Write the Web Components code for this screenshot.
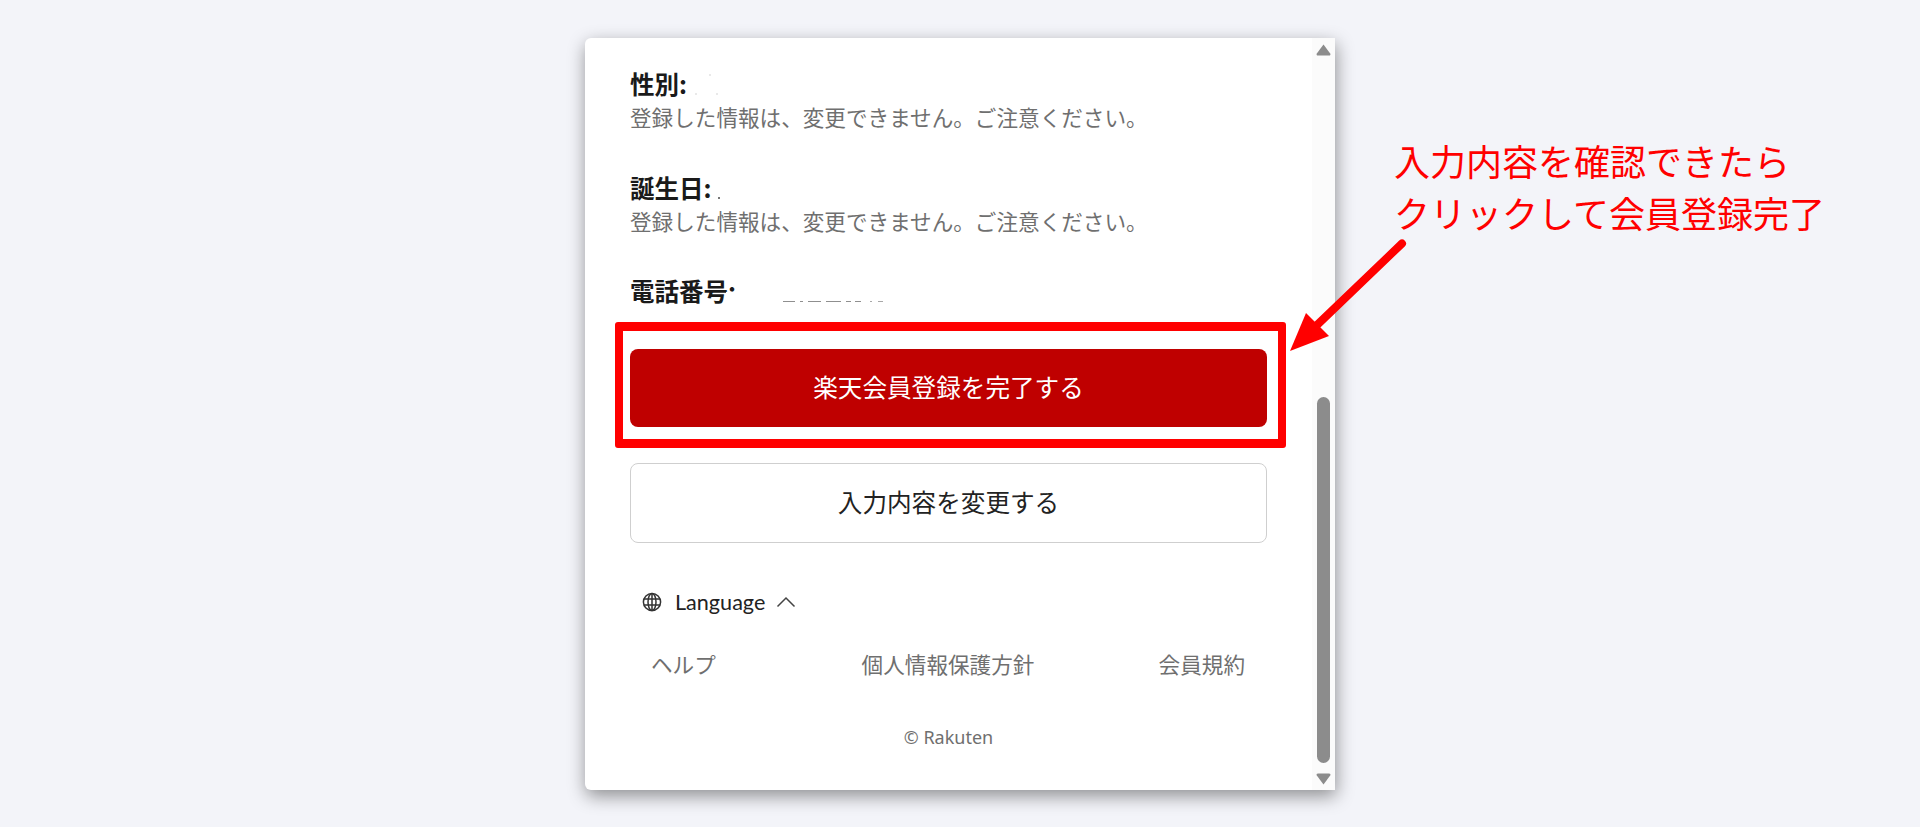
<!DOCTYPE html>
<html lang="ja"><head><meta charset="utf-8"><title>楽天会員登録</title>
<style>
html,body{margin:0;height:100%;}
body{background:#f3f4f9;overflow:hidden;font-family:"Noto Sans CJK JP","Noto Sans",sans-serif;}
</style></head><body>
<app-stage>
  <reg-card>
    <reg-field label="性別:" mask="sex">登録した情報は、変更できません。ご注意ください。</reg-field>
    <reg-field label="誕生日:" mask="birth">登録した情報は、変更できません。ご注意ください。</reg-field>
    <reg-field label="電話番号:" mask="phone" last></reg-field>
    <reg-button variant="primary">楽天会員登録を完了する</reg-button>
    <reg-button variant="secondary">入力内容を変更する</reg-button>
    <reg-footer></reg-footer>
  </reg-card>
  <call-out></call-out>
</app-stage>
<script>
function def(name, html, init){
  customElements.define(name, class extends HTMLElement{
    constructor(){super();this.attachShadow({mode:'open'}).innerHTML=html;}
    connectedCallback(){if(init)init(this);}
  });
}
def('app-stage',`<style>
:host{display:flex;justify-content:center;align-items:flex-start;box-sizing:border-box;height:827px;padding-top:38px;position:relative;}
</style><slot></slot>`);

def('reg-card',`<style>
:host{display:flex;width:750px;height:752px;background:#fff;border-radius:6px 0 0 6px;box-shadow:1px 6px 18px rgba(0,0,0,.42);overflow:hidden;flex:none;}
.body{flex:1;min-width:0;box-sizing:border-box;padding:30px 0 0 45px;display:flex;flex-direction:column;align-items:flex-start;}
</style><div class="body"><slot></slot></div><reg-scrollbar></reg-scrollbar>`);

def('reg-scrollbar',`<style>
:host{display:flex;flex-direction:column;align-items:center;width:23px;flex:none;background:#fbfbfb;box-sizing:border-box;padding:6px 0;position:relative;}
svg{display:block;flex:none}
.sp{height:341px;flex:none}
.thumb{width:13px;height:366px;background:#8c8c8c;border-radius:7px;flex:none;}
.sp2{height:10px;flex:none}
</style>
<svg width="15" height="12" viewBox="0 0 15 12"><path d="M7.5 .5 L14.2 9.5 Q15 11.5 13 11.5 L2 11.5 Q0 11.5 .8 9.5 Z" fill="#8c8c8c"/></svg>
<div class="sp"></div><div class="thumb"></div><div class="sp2"></div>
<svg width="15" height="12" viewBox="0 0 15 12"><path d="M7.5 11.5 L14.2 2.5 Q15 .5 13 .5 L2 .5 Q0 .5 .8 2.5 Z" fill="#8c8c8c"/></svg>`);

def('reg-field',`<style>
:host{display:block;height:103.5px;width:637px;position:relative;}
:host([last]){height:74px;}
.l{font-size:24.5px;line-height:34px;margin-top:-1px;margin-bottom:1px;font-weight:700;color:#1a1a1a;}
.s{font-size:21.6px;line-height:34px;margin-top:-2px;color:#6f6f6f;}
.m{position:absolute;background:#fff;}
.d{position:absolute;height:1px;width:102px;background:linear-gradient(90deg,#8f8f8f 0 12px,transparent 12px 17px,#8f8f8f 17px 20px,transparent 20px 25px,#8f8f8f 25px 38px,transparent 38px 43px,#8f8f8f 43px 58px,transparent 58px 63px,#8f8f8f 63px 68px,transparent 68px 72px,#8f8f8f 72px 78px,transparent 78px 87px,#a8a8a8 87px 89px,transparent 89px 95px,#a8a8a8 95px 100px,transparent 100px);}
.p{position:absolute;width:2px;height:2px;background:#e9e9e9;}
</style><div class="l"></div><div class="s"><slot></slot></div><div id="o"></div>`,el=>{
  const r=el.shadowRoot;
  r.querySelector('.l').textContent=el.getAttribute('label');
  const k=el.getAttribute('mask'),o=r.getElementById('o');
  if(k==='phone'){o.innerHTML='<div class="m" style="left:96px;top:17px;width:10px;height:17px"></div><div class="d" style="left:153px;top:26px"></div>';}
  if(k==='sex'){o.innerHTML='<div class="p" style="left:65px;top:25px"></div><div class="p" style="left:79px;top:6px"></div><div class="p" style="left:86px;top:25px"></div>';}
  if(k==='birth'){o.innerHTML='<div class="p" style="left:88px;top:25px;background:#777"></div>';}
});

def('reg-button',`<style>
:host{display:flex;align-items:center;justify-content:center;box-sizing:border-box;width:637px;font-size:24.6px;border-radius:8px;padding-bottom:4px;}
:host([variant=primary]){height:78px;background:#bf0000;color:#fff;margin-top:0;}
:host([variant=secondary]){height:80px;background:#fff;color:#222;border:1px solid #cfcfcf;margin-top:36px;}
</style><slot></slot>`);

def('reg-footer',`<style>
:host{display:block;width:637px;}
.lang{display:flex;align-items:center;margin-top:44px;height:30px;padding-left:12px;color:#222;font:21.6px/30px "Lato","Noto Sans",sans-serif;}
.lang svg{display:block;flex:none}
.t{margin:0 11px 0 13px;}
.links{display:grid;grid-template-columns:1fr auto 1fr;margin-top:31px;padding:0 22px 1px 21px;font-size:21.6px;line-height:32px;color:#6f6f6f;}
.links span:last-child{justify-self:end}
.c{margin-top:44px;text-align:center;font:18px/24px "Noto Sans",sans-serif;color:#6f6f6f;}
</style>
<div class="lang">
<svg width="20" height="20" viewBox="0 0 20 20" fill="none" stroke="#333" stroke-width="1.5"><circle cx="10" cy="10" r="8.6"/><ellipse cx="10" cy="10" rx="4" ry="8.6"/><path d="M10 1.4V18.6M2 7H18M2 13H18"/></svg>
<span class="t">Language</span>
<svg width="20" height="12" viewBox="0 0 20 12" fill="none" stroke="#444" stroke-width="1.5"><path d="M1.5 10.5 L10 2 L18.5 10.5"/></svg>
</div>
<div class="links"><span>ヘルプ</span><span>個人情報保護方針</span><span>会員規約</span></div>
<div class="c">© Rakuten</div>`);

def('call-out',`<style>
:host{display:block;position:absolute;left:0;top:0;width:1920px;height:827px;pointer-events:none;}
.f{position:absolute;left:615px;top:322px;width:671px;height:126px;box-sizing:border-box;border:solid #ff0000;border-width:9px 8px;border-radius:3px;}
.t{position:absolute;left:1394px;top:134px;font-size:36px;line-height:52px;color:#ff0000;white-space:nowrap;}
svg{position:absolute;left:0;top:0;}
</style>
<div class="f"></div>
<div class="t">入力内容を確認できたら<br>クリックして会員登録完了</div>
<svg width="1920" height="827" viewBox="0 0 1920 827"><path d="M1402 243.5 L1316 326" stroke="#f00" stroke-width="8" stroke-linecap="round" fill="none"/><path d="M1290 351 L1306 313 L1329 336 Z" fill="#f00"/></svg>`);
</script></body></html>
